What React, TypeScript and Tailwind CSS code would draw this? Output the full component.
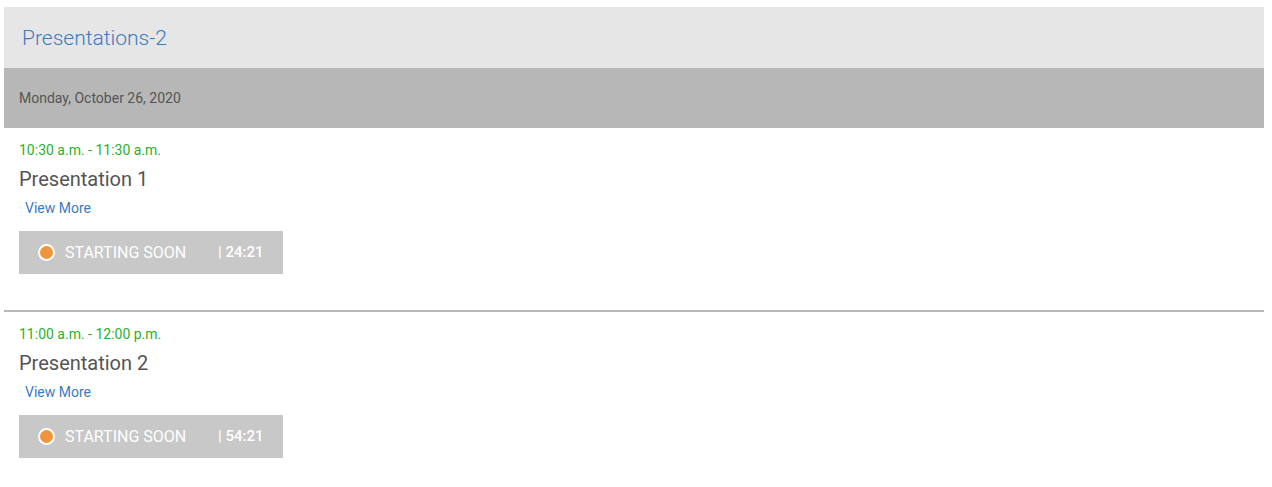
const sessions = [
  { id: 1, time: '10:30 a.m. - 11:30 a.m.', title: 'Presentation 1', countdown: '24:21' },
  { id: 2, time: '11:00 a.m. - 12:00 p.m.', title: 'Presentation 2', countdown: '54:21' },
]

function StatusBadge({ countdown }: { countdown: string }) {
  return (
    <div className="mt-[13px] flex h-[43px] w-[264px] items-center bg-[#c8c8c8] pl-[19px] text-[16px] text-white">
      <span className="h-[17px] w-[17px] shrink-0 rounded-full border-2 border-white bg-[#f0953a]" />
      <span className="ml-[10px] w-[153px] shrink-0">STARTING SOON</span>
      <span className="text-[15px] font-medium">| {countdown}</span>
    </div>
  )
}

export default function App() {
  return (
    <div className="min-h-[487px] bg-white px-[4px] pt-[7px] pr-[8px]" style={{ fontFamily: 'Roboto, "Liberation Sans", sans-serif' }}>
      <div className="flex h-[61px] items-center bg-[#e6e6e6] pl-[18px] pt-[2px]">
        <h1 className="text-[21px] font-light text-[#3a7bbf]">Presentations-2</h1>
      </div>
      <div className="flex h-[60px] items-center bg-[#b7b7b7] pl-[15px]">
        <span className="text-[14px] text-[#555]">Monday, October 26, 2020</span>
      </div>

      {sessions.map((s, i) => (
        <div
          key={s.id}
          className={`pl-[15px] pt-[12px] ${i < sessions.length - 1 ? 'border-b-2 border-[#b7b7b7] pb-[36px]' : ''}`}
        >
          <div className="text-[14px] leading-[20px] text-[#2bb02b]">{s.time}</div>
          <div className="mt-[5px] text-[20px] leading-[28px] text-[#555]">{s.title}</div>
          <a href="#" className="ml-[6px] mt-[5px] block text-[14px] leading-[20px] text-[#3a7bbf]">
            View More
          </a>
          <StatusBadge countdown={s.countdown} />
        </div>
      ))}
    </div>
  )
}
